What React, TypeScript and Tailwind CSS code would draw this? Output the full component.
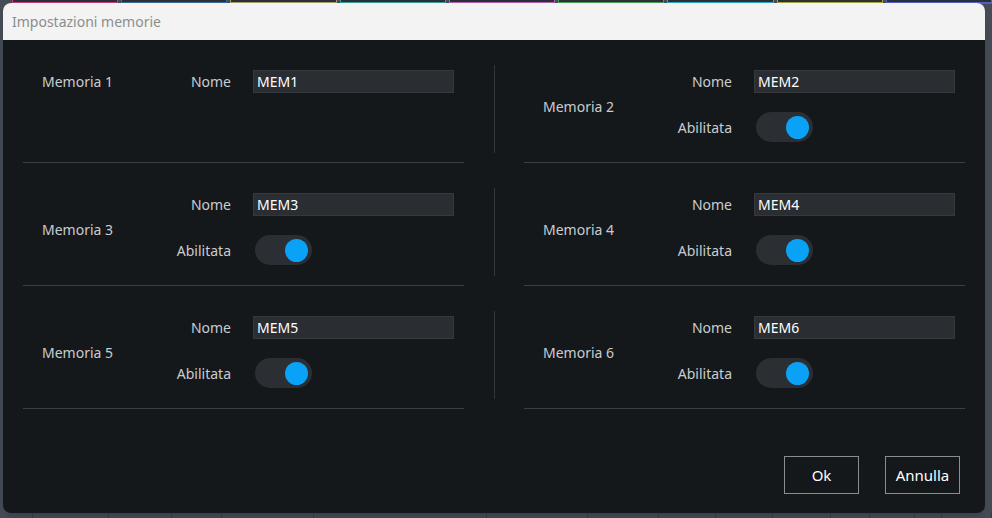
import React from "react";

type Memoria = { id: number; nome: string; abilitata?: boolean };

const memorie: Memoria[] = [
  { id: 1, nome: "MEM1" },
  { id: 2, nome: "MEM2", abilitata: true },
  { id: 3, nome: "MEM3", abilitata: true },
  { id: 4, nome: "MEM4", abilitata: true },
  { id: 5, nome: "MEM5", abilitata: true },
  { id: 6, nome: "MEM6", abilitata: true },
];

const tabColors = [
  "border-[#c0407a]",
  "border-[#3a6a9a]",
  "border-[#a89a6a]",
  "border-[#3a9a9a]",
  "border-[#b060b0]",
  "border-[#4a9a5a]",
  "border-[#30a8c0]",
  "border-[#a8a040]",
  "border-[#5060c0]",
];

//== switch ==//
const Toggle = ({ on }: { on: boolean }) => (
  <div
    className={`ml-[2px] flex h-[30px] w-[57px] items-center rounded-full bg-[#2b2f33] px-[4px] ${
      on ? "justify-end" : "justify-start"
    }`}
  >
    <div className="h-[23px] w-[23px] rounded-full bg-[#0aa2f7]" />
  </div>
);

const MemoriaCell = ({ m }: { m: Memoria }) => (
  <div className="h-[123px] border-b border-[#3b3f44] pl-[19px] pt-[30px]">
    <div className="flex items-center">
      <span className="w-[120px] text-[#c9ccd0]">Memoria {m.id}</span>
      <div className="flex flex-col gap-[20px]">
        <div className="flex h-[22px] items-center gap-[22px]">
          <span className="w-[69px] text-right text-[#c9ccd0]">Nome</span>
          <div className="flex h-[23px] w-[201px] items-center border border-[#35393e] bg-[#2a2d31] pl-[3px] text-white">
            {m.nome}
          </div>
        </div>
        {m.abilitata !== undefined && (
          <div className="flex h-[30px] items-center gap-[22px]">
            <span className="w-[69px] text-right text-[#c9ccd0]">Abilitata</span>
            <Toggle on={m.abilitata} />
          </div>
        )}
      </div>
    </div>
  </div>
);

const Divider = () => (
  <div className="flex h-[123px] justify-center pt-[25px] pb-[10px]">
    <div className="w-px bg-[#33373b]" />
  </div>
);

export default function App() {
  const rows = [0, 2, 4];

  return (
    <div
      className="relative h-[518px] w-[992px] overflow-hidden bg-[#464c55] text-[14px]"
      style={{ fontFamily: '"Noto Sans", "Open Sans", sans-serif' }}
    >
      {/* app behind the dialog */}
      <div className="flex gap-[3px] pl-[12px]">
        {tabColors.map((c, i) => (
          <div key={i} className={`h-[4px] w-[110px] border-b-2 border-x ${c} bg-[#2b3038]`} />
        ))}
      </div>
      <div className="absolute bottom-0 left-0 flex h-[6px] w-full">
        {[20, 45, 38, 30, 55, 104, 60, 43, 34, 34, 35, 23, 27, 16, 30].map((w, i) => (
          <div key={i} className="h-full border-r border-[#3a3f46]" style={{ width: w * 2 }} />
        ))}
      </div>

      {/* dialog */}
      <div className="absolute left-[3px] top-[3px] flex h-[510px] w-[982px] flex-col overflow-hidden rounded-[8px] bg-[#15181b] shadow-lg">
        <div className="flex h-[37px] shrink-0 items-center bg-[#f3f3f3] pl-[9px] text-[14px] text-[#8d8d8d]">
          Impostazioni memorie
        </div>

        <div className="flex flex-col px-[20px]">
          {rows.map((r) => (
            <div key={r} className="grid grid-cols-[441px_60px_441px]">
              <MemoriaCell m={memorie[r]} />
              <Divider />
              <MemoriaCell m={memorie[r + 1]} />
            </div>
          ))}
        </div>

        <div className="flex-1" />

        <div className="flex justify-end gap-[26px] pb-[19px] pr-[25px]">
          <button className="h-[38px] w-[75px] border border-[#8a8d90] text-[15px] text-white">Ok</button>
          <button className="h-[38px] w-[75px] border border-[#8a8d90] text-[15px] text-white">Annulla</button>
        </div>
      </div>
    </div>
  );
}
